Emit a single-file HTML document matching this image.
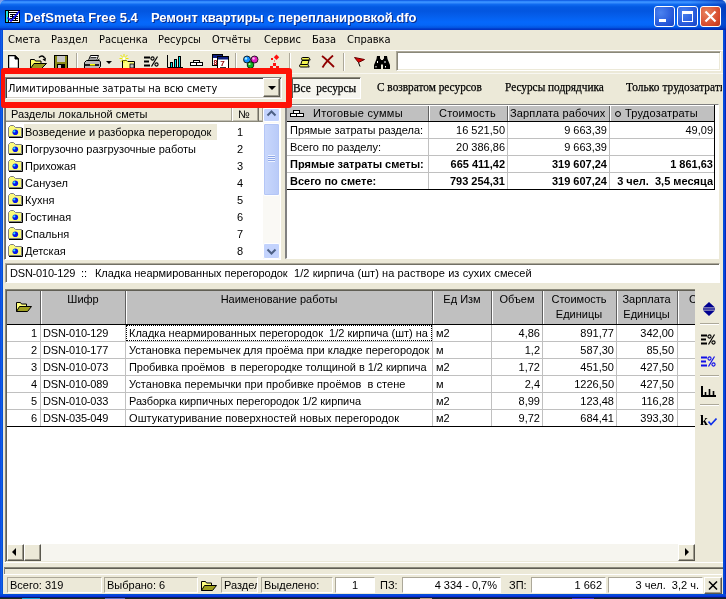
<!DOCTYPE html>
<html lang="ru">
<head>
<meta charset="utf-8">
<title>DefSmeta Free 5.4</title>
<style>
*{box-sizing:border-box;margin:0;padding:0}
html,body{width:726px;height:599px;overflow:hidden;background:#e8eefc}
body{position:relative;font-family:"Liberation Sans",sans-serif;font-size:11px;color:#000}
.abs,.abs>*{position:absolute}
#win{will-change:transform;position:absolute;left:0;top:0;width:726px;height:598px;background:#ece9d8;overflow:hidden;border-radius:5px 5px 0 0}
#title{left:0;top:0;width:726px;height:30px;background:linear-gradient(#0042d4 0,#2c86fc 1px,#3a90ff 2.5px,#0f6af0 4.5px,#0359e2 7px,#0356e0 11px,#0560ee 17px,#0568fc 22px,#0566f8 25px,#0355e2 27.5px,#0036c6 29px,#0032c0 30px)}
#title .t{top:10px;color:#fff;font-weight:bold;font-size:13px;white-space:pre;text-shadow:1px 1px 0 #0a2a8a;letter-spacing:0}
.bl{left:0;top:30px;width:3px;height:566px;background:linear-gradient(90deg,#0831d9,#166aee 1px,#0855dd 2px,#0046d0 3px)}
.br{left:723px;top:30px;width:3px;height:566px;background:linear-gradient(90deg,#0046d0,#0855dd 1px,#0831d9 2px,#001ea0)}
.bb{left:0;top:594px;width:726px;height:4px;background:linear-gradient(#0046d0 0,#0855dd 1px,#0831d9 2px,#0831d9 3px,#0a1a60 3px,#0a1a60 4px)}
.cb{top:6px;width:21px;height:21px;border:1px solid #fff;border-radius:3px;background:radial-gradient(circle at 30% 30%,#4b82ef,#2355d8 70%,#1a45c0)}
.menu span{top:33px;font-family:"DejaVu Sans Condensed","DejaVu Sans",sans-serif;font-size:11px;white-space:pre}
.sunk{border:1px solid;border-color:#808080 #fff #fff #808080;box-shadow:inset 1px 1px 0 #404040,inset -1px -1px 0 #d4d0c8;background:#fff}
.hdr{background:#c0c0c0}
.g{background:#c0c0c0}
.row{white-space:pre}
.tabs span{top:80px;font-family:"Liberation Serif",serif;font-size:12px;white-space:pre;-webkit-text-stroke:.25px #000;transform:scaleX(.942);transform-origin:0 0}
.lst div{left:25px;height:17px;line-height:17px;white-space:pre}
.lst i{left:231px;font-style:normal;line-height:17px}
.fold{width:14px;height:12px}
.vl{width:1px;background:#c0c0c0}
.hl{height:1px;background:#c0c0c0}
.cell{height:17px;line-height:17px;white-space:pre;overflow:hidden}
.r{text-align:right}
.st{top:577px;height:16px;border:1px solid;border-color:#aca899 #fff #fff #aca899;line-height:15px;white-space:pre;overflow:hidden}
</style>
</head>
<body>
<div style="position:absolute;left:0;top:598px;width:726px;height:1px;background:linear-gradient(90deg,#20301c 0,#20301c 22px,#18a0d0 22px,#18a0d0 40px,#20301c 40px,#20301c 105px,#6070c0 105px,#6070c0 125px,#1c2820 125px,#1c2820 420px,#c0a080 420px,#c0a080 432px,#1c2428 432px,#1c2428 572px,#3030e0 572px,#3030e0 594px,#1c2428 594px)"></div>
<div style="position:absolute;left:0;top:0;width:8px;height:8px;background:#7c9cec"></div>
<div id="win" class="abs">
  <!-- title bar -->
  <div id="title" class="abs">
    <svg style="left:5px;top:10px" width="15" height="13" viewBox="0 0 15 13"><rect x="0" y="0" width="15" height="13" fill="#000"/><rect x="1" y="1" width="2" height="11" fill="#1fe0e0"/><rect x="4" y="1" width="10" height="11" fill="#fff"/><path d="M4 2.500h10M5 4.500h8M5 6.500h8M5 8.500h8M5 10.500h8M7.500 4v7M10.500 4v7" stroke="#000" stroke-width="1" fill="none"/><path d="M2.500 7.500l3.500 3.500L14.500 1" stroke="#1010f0" stroke-width="1.700" fill="none"/></svg>
    <div style="left:690px;top:0;width:36px;height:30px;background:linear-gradient(90deg,rgba(0,30,150,0),rgba(0,30,150,.45))"></div>
    <span class="t" style="left:24px;letter-spacing:.07px">DefSmeta Free 5.4</span>
    <span class="t" style="left:151px;letter-spacing:-.05px">Ремонт квартиры с перепланировкой.dfo</span>
    <div class="cb" style="left:654px"><div style="position:absolute;left:4px;top:12px;width:7px;height:3px;background:#fff"></div></div>
    <div class="cb" style="left:677px"><div style="position:absolute;left:4px;top:4px;width:11px;height:11px;border:1px solid #fff;border-top-width:3px"></div></div>
    <div class="cb" style="left:700px;background:radial-gradient(circle at 30% 30%,#e8845f,#d6482a 70%,#b8361c)"><svg style="position:absolute;left:3px;top:3px" width="13" height="13" viewBox="0 0 13 13"><path d="M1.500 1.500l10 10M11.500 1.500l-10 10" stroke="#fff" stroke-width="2.200"/></svg></div>
  </div>
  <div class="abs"><div class="bl"></div><div class="br"></div><div class="bb"></div></div>

  <!-- menu -->
  <div class="abs menu">
    <span style="left:8px">Смета</span><span style="left:51px">Раздел</span><span style="left:99px">Расценка</span><span style="left:158px">Ресурсы</span><span style="left:212px">Отчёты</span><span style="left:264px">Сервис</span><span style="left:312px">База</span><span style="left:347px">Справка</span>
  </div>

  <!-- toolbar -->
  <div class="abs" id="tb">
    <div style="left:3px;top:50px;width:720px;height:1px;background:#fff"></div>
    <div style="left:396px;top:51px;width:325px;height:20px;background:#fff;border:1px solid;border-color:#aca899 #fff #fff #aca899;box-shadow:inset 1px 1px 0 #8a887a,inset -1px -1px 0 #ece9d8"></div>
    <div style="left:3px;top:73px;width:720px;height:1px;background:#f8f7f1"></div>
    <div style="left:76px;top:53px;width:2px;height:18px;background:linear-gradient(90deg,#aca899 1px,#fff 1px)"></div>
    <div style="left:235px;top:53px;width:2px;height:18px;background:linear-gradient(90deg,#aca899 1px,#fff 1px)"></div>
    <div style="left:289px;top:53px;width:2px;height:18px;background:linear-gradient(90deg,#aca899 1px,#fff 1px)"></div>
    <div style="left:343px;top:53px;width:2px;height:18px;background:linear-gradient(90deg,#aca899 1px,#fff 1px)"></div>
    <svg style="left:8px;top:55px" width="11" height="14" viewBox="0 0 11 14"><path d="M0.600 0.600h6.400l3.400 3.400v9.400h-9.800z" fill="#fff" stroke="#000" stroke-width="1.200"/><path d="M7 0.600v3.400h3.400z" fill="#000" stroke="#000"/></svg>
    <svg style="left:30px;top:55px" width="17" height="15" viewBox="0 0 17 15"><path d="M9 2.500c2-2 4.500-2 5.500 0.500" fill="none" stroke="#000" stroke-width="1.500"/><path d="M12.500 4.500l3.500-2-0.500 4z" fill="#000"/><path d="M0.500 13.500V4.500h4l1 1.500h5.500v2.500" fill="#ffff66" stroke="#000"/><path d="M0.500 13.500l3.500-5h12.500l-5 5z" fill="#9a9a20" stroke="#000"/></svg>
    <svg style="left:54px;top:55px" width="14" height="15" viewBox="0 0 14 15"><rect x="0.500" y="0.500" width="13" height="14" fill="#8a8a18" stroke="#000"/><rect x="3" y="1" width="8" height="6" fill="#c8c8c8"/><rect x="3" y="9" width="8" height="5" fill="#000"/><rect x="4" y="10" width="3" height="4" fill="#c8c8c8"/></svg>
    <svg style="left:84px;top:55px" width="17" height="14" viewBox="0 0 17 14"><path d="M4.500 5.500l2-5h8l-2 5z" fill="#fff" stroke="#000"/><path d="M6.500 2.500h6M6 4h6" stroke="#000" stroke-width=".8"/><path d="M0.500 7.500l2-2h13l1 1.500v4.500l-2 2h-14z" fill="#b8b8b8" stroke="#000"/><rect x="1" y="9" width="14" height="2" fill="#202020"/><path d="M13.500 5.500l2 -1.500" stroke="#000"/><rect x="6" y="9" width="5" height="1.500" fill="#ffff00"/></svg>
    <div style="left:106px;top:61px;width:0;height:0;border:3px solid transparent;border-top:3px solid #000;border-bottom:0"></div>
    <svg style="left:119px;top:54px" width="17" height="15" viewBox="0 0 17 15"><path d="M3.500 14.500V6.500h4l1 1h7v7z" fill="#ffff80" stroke="#000"/><rect x="11" y="10" width="4" height="4" fill="#c0c0c0" stroke="#000" stroke-width=".8"/><path d="M5 0v9M0.500 4.500h9M1.500 1l7 7M8.500 1l-7 7" stroke="#e8e800" stroke-width="1"/><circle cx="5" cy="4.500" r="1.500" fill="#fff"/></svg>
    <svg style="left:144px;top:56px" width="15" height="11" viewBox="0 0 15 11"><path d="M0 1.500h6M0 5.500h5M0 9.500h6" stroke="#000" stroke-width="2"/><path d="M13.500 0.500l-6 10" stroke="#000" stroke-width="1.200"/><circle cx="8.500" cy="2.500" r="1.600" fill="none" stroke="#000" stroke-width="1.100"/><circle cx="12.500" cy="8.500" r="1.600" fill="none" stroke="#000" stroke-width="1.100"/></svg>
    <svg style="left:167px;top:55px" width="16" height="13" viewBox="0 0 16 13"><path d="M0.500 0v12.500H16" stroke="#000" fill="none"/><rect x="3.500" y="7.500" width="2" height="5" fill="#00e0e0" stroke="#000"/><rect x="7.500" y="4.500" width="2" height="8" fill="#00e0e0" stroke="#000"/><rect x="11.500" y="1.500" width="2" height="11" fill="#00e0e0" stroke="#000"/></svg>
    <svg style="left:190px;top:60px" width="13" height="6" viewBox="0 0 13 6"><rect x="3.500" y="0.500" width="6" height="2" fill="#fff" stroke="#000"/><rect x="0.500" y="2.500" width="12" height="3" fill="#fff" stroke="#000"/><path d="M6.500 2.500v3" stroke="#000"/></svg>
    <svg style="left:212px;top:54px" width="17" height="15" viewBox="0 0 17 15"><rect x="0.500" y="0.500" width="10" height="11" fill="#fff" stroke="#000"/><rect x="1" y="1" width="9" height="3" fill="#102080"/><text x="1.500" y="10.500" font-family="Liberation Sans" font-weight="bold" font-size="7" fill="#a00000">8</text><rect x="5.500" y="2.500" width="11" height="12" fill="#fff" stroke="#000"/><rect x="6" y="3" width="10" height="2.500" fill="#102080"/><text x="8.300" y="12" font-family="Liberation Sans" font-weight="bold" font-size="8" fill="#900000">7</text><path d="M8 13.500h6" stroke="#000" stroke-width=".8"/></svg>
    <svg style="left:243px;top:55px" width="16" height="14" viewBox="0 0 16 14"><circle cx="4" cy="4.500" r="3.500" fill="#1090ff" stroke="#000" stroke-width=".8"/><circle cx="11.500" cy="4.500" r="3.500" fill="#e020c0" stroke="#000" stroke-width=".8"/><circle cx="7.500" cy="10" r="3.300" fill="#10b020" stroke="#000" stroke-width=".8"/><circle cx="3" cy="3.500" r="1.200" fill="#aef"/><circle cx="10.500" cy="3.500" r="1.200" fill="#fbe"/><circle cx="6.500" cy="9" r="1.100" fill="#bfb"/></svg>
    <svg style="left:269px;top:54px" width="11" height="15" viewBox="0 0 11 15"><path d="M7.500 0.500l2.700 2.700-2.700 2.700-2.700-2.700z" fill="#ff1010"/><rect x="2" y="4" width="2" height="2" fill="#ff1010"/><rect x="5" y="6.500" width="1" height="1" fill="#ff1010"/><rect x="4" y="9" width="3" height="3" fill="#ff1010"/><rect x="1" y="12" width="3" height="2" fill="#ff1010"/><rect x="7" y="12" width="3" height="2" fill="#ff1010"/></svg>
    <svg style="left:299px;top:56px" width="12" height="12" viewBox="0 0 12 12"><path d="M3 4.500L1.500 9.500h7L10 4.500z" fill="#f4f450" stroke="#000"/><rect x="2.500" y="1.500" width="8" height="2.500" rx="1.200" fill="#f4f450" stroke="#000"/><rect x="0.500" y="8.500" width="9" height="2.500" rx="1.200" fill="#f4f450" stroke="#000"/><path d="M10.500 3c1 0 1 1.500 0 1.500M9.500 10c1 0 1 1.500 0 1.500" stroke="#000" fill="none" stroke-width=".8"/></svg>
    <svg style="left:321px;top:55px" width="14" height="13" viewBox="0 0 14 13"><path d="M1 1c4 3 8 7 12 11M12 0.500C8 4 4 8 1.500 12.500" stroke="#900000" stroke-width="1.800" fill="none"/></svg>
    <svg style="left:354px;top:57px" width="11" height="10" viewBox="0 0 11 10"><path d="M0.500 0.500l10 2-6 3z" fill="#e00000" stroke="#600"/><path d="M4.500 5.500l1.500 4" stroke="#000"/></svg>
    <svg style="left:374px;top:56px" width="16" height="13" viewBox="0 0 16 13"><path d="M3 0h3v2.500l1 1V13H0V9l2.500-6z" fill="#000"/><path d="M13 0h-3v2.500l-1 1V13h7V9l-2.500-6z" fill="#000"/><rect x="6.500" y="4" width="3" height="4.500" fill="#000"/><rect x="3" y="5" width="1" height="2" fill="#fff"/><rect x="10.500" y="5" width="1" height="2" fill="#fff"/><rect x="1.500" y="10" width="1" height="1.500" fill="#fff"/><rect x="11" y="10" width="1" height="1.500" fill="#fff"/></svg>
  </div>

  <!-- tabs -->
  <div class="abs tabs">
    <div style="left:291px;top:77px;width:70px;height:22px;background:#f6f5ef;border:1px solid;border-color:#8a887a #fff #fff #8a887a;box-shadow:inset 1px 1px 0 #605e54"></div>
    <span style="left:293px;top:81px">Все  ресурсы</span><span style="left:377px">С возвратом ресурсов</span><span style="left:505px">Ресурсы подрядчика</span><span style="left:626px;width:102px;overflow:hidden;letter-spacing:.1px">Только трудозатраты</span>
  </div>

  <!-- combobox + red box -->
  <div class="abs">
    <div class="sunk" style="left:5px;top:77px;width:277px;height:22px"></div>
    <span style="left:8px;top:82px;font-family:'DejaVu Sans Condensed','DejaVu Sans',sans-serif;font-size:11px;white-space:pre">Лимитированные затраты на всю смету</span>
    <div style="left:263px;top:78px;width:17px;height:19px;background:#ece9d8;border:1px solid;border-color:#fff #5a584e #5a584e #fff;box-shadow:inset -1px -1px 0 #9d9a8c"></div>
    <div style="left:268px;top:86px;width:0;height:0;border:4px solid transparent;border-top:4px solid #000;border-bottom:0"></div>
    <div style="left:1px;top:68px;width:291px;height:40px;border:6px solid #fe1206;border-left-width:4px;border-radius:3px;z-index:10"></div>
  </div>

  <!-- left list -->
  <div class="abs" id="left">
    <div style="left:4px;top:107px;width:277px;height:153px;background:#fff;border:1px solid;border-color:#808080 #fff #fff #808080;box-shadow:inset 1px 0 0 #716f64"></div>
    <div style="left:6px;top:108px;width:257px;height:14px;background:#ece9d8;border-bottom:1px solid #8a887a;box-shadow:inset 0 -1px 0 #c0bdb0;border-right:1px solid #aca899"></div>
    <div style="left:231px;top:108px;width:1px;height:13px;background:#aca899"></div>
    <div style="left:232px;top:108px;width:1px;height:13px;background:#fff"></div>
    <div style="left:257px;top:108px;width:2px;height:13px;background:linear-gradient(90deg,#aca899 1px,#716f64 1px)"></div>
    <span style="left:11px;top:108px;white-space:pre">Разделы локальной сметы</span>
    <span style="left:238px;top:108px">№</span>
    <div style="left:24px;top:124px;width:193px;height:16px;background:#ece9d8"></div>
    <div class="abs lst">
      <div style="top:124px">Возведение и разборка перегородок</div><i style="top:124px;left:237px">1</i>
      <div style="top:141px">Погрузочно разгрузочные работы</div><i style="top:141px;left:237px">2</i>
      <div style="top:158px">Прихожая</div><i style="top:158px;left:237px">3</i>
      <div style="top:175px">Санузел</div><i style="top:175px;left:237px">4</i>
      <div style="top:192px">Кухня</div><i style="top:192px;left:237px">5</i>
      <div style="top:209px">Гостиная</div><i style="top:209px;left:237px">6</i>
      <div style="top:226px">Спальня</div><i style="top:226px;left:237px">7</i>
      <div style="top:243px">Детская</div><i style="top:243px;left:237px">8</i>
    </div>
    <svg style="left:8px;top:125px" width="15" height="13" viewBox="0 0 15 13"><path d="M1 12.500h13.500V3" stroke="#000" fill="none"/><path d="M0.500 11.500V2.500l2-2h3l2 2h6v9z" fill="#fbfb7a" stroke="#808080"/><circle cx="7.300" cy="7.200" r="2.800" fill="#0a18e8"/><circle cx="6.300" cy="6.400" r="1.100" fill="#30e8ff"/></svg>
    <svg style="left:8px;top:142px" width="15" height="13" viewBox="0 0 15 13"><path d="M1 12.500h13.500V3" stroke="#000" fill="none"/><path d="M0.500 11.500V2.500l2-2h3l2 2h6v9z" fill="#fbfb7a" stroke="#808080"/><circle cx="7.300" cy="7.200" r="2.800" fill="#0a18e8"/><circle cx="6.300" cy="6.400" r="1.100" fill="#30e8ff"/></svg>
    <svg style="left:8px;top:159px" width="15" height="13" viewBox="0 0 15 13"><path d="M1 12.500h13.500V3" stroke="#000" fill="none"/><path d="M0.500 11.500V2.500l2-2h3l2 2h6v9z" fill="#fbfb7a" stroke="#808080"/><circle cx="7.300" cy="7.200" r="2.800" fill="#0a18e8"/><circle cx="6.300" cy="6.400" r="1.100" fill="#30e8ff"/></svg>
    <svg style="left:8px;top:176px" width="15" height="13" viewBox="0 0 15 13"><path d="M1 12.500h13.500V3" stroke="#000" fill="none"/><path d="M0.500 11.500V2.500l2-2h3l2 2h6v9z" fill="#fbfb7a" stroke="#808080"/><circle cx="7.300" cy="7.200" r="2.800" fill="#0a18e8"/><circle cx="6.300" cy="6.400" r="1.100" fill="#30e8ff"/></svg>
    <svg style="left:8px;top:193px" width="15" height="13" viewBox="0 0 15 13"><path d="M1 12.500h13.500V3" stroke="#000" fill="none"/><path d="M0.500 11.500V2.500l2-2h3l2 2h6v9z" fill="#fbfb7a" stroke="#808080"/><circle cx="7.300" cy="7.200" r="2.800" fill="#0a18e8"/><circle cx="6.300" cy="6.400" r="1.100" fill="#30e8ff"/></svg>
    <svg style="left:8px;top:210px" width="15" height="13" viewBox="0 0 15 13"><path d="M1 12.500h13.500V3" stroke="#000" fill="none"/><path d="M0.500 11.500V2.500l2-2h3l2 2h6v9z" fill="#fbfb7a" stroke="#808080"/><circle cx="7.300" cy="7.200" r="2.800" fill="#0a18e8"/><circle cx="6.300" cy="6.400" r="1.100" fill="#30e8ff"/></svg>
    <svg style="left:8px;top:227px" width="15" height="13" viewBox="0 0 15 13"><path d="M1 12.500h13.500V3" stroke="#000" fill="none"/><path d="M0.500 11.500V2.500l2-2h3l2 2h6v9z" fill="#fbfb7a" stroke="#808080"/><circle cx="7.300" cy="7.200" r="2.800" fill="#0a18e8"/><circle cx="6.300" cy="6.400" r="1.100" fill="#30e8ff"/></svg>
    <svg style="left:8px;top:244px" width="15" height="13" viewBox="0 0 15 13"><path d="M1 12.500h13.500V3" stroke="#000" fill="none"/><path d="M0.500 11.500V2.500l2-2h3l2 2h6v9z" fill="#fbfb7a" stroke="#808080"/><circle cx="7.300" cy="7.200" r="2.800" fill="#0a18e8"/><circle cx="6.300" cy="6.400" r="1.100" fill="#30e8ff"/></svg>
    <!-- scrollbar -->
    <div style="left:263px;top:108px;width:17px;height:151px;background:#faf9f5"></div>
    <div style="left:263px;top:108px;width:17px;height:14px;background:#c3d3fd;border:1px solid #fff;border-radius:2px"></div>
    <div style="left:263px;top:123px;width:17px;height:73px;background:linear-gradient(90deg,#cad8fc,#b8caf8);border:1px solid #fff;border-radius:2px;box-shadow:inset 0 0 0 1px #b4c6f6"></div>
    <div style="left:263px;top:243px;width:17px;height:16px;background:#c3d3fd;border:1px solid #fff;border-radius:2px"></div>
    <svg style="left:266px;top:109px" width="11" height="8" viewBox="0 0 11 8"><path d="M1.5 6.500l4-4 4 4" stroke="#4d6185" stroke-width="2" fill="none"/></svg>
    <svg style="left:266px;top:248px" width="11" height="8" viewBox="0 0 11 8"><path d="M1.500 1.500l4 4 4-4" stroke="#4d6185" stroke-width="2" fill="none"/></svg>
    <div style="left:268px;top:155px;width:7px;height:7px;background:repeating-linear-gradient(#eef3ff 0,#eef3ff 1px,#8ea7e8 1px,#8ea7e8 2px)"></div>
  </div>

  <!-- summary table -->
  <div class="abs" id="sum">
    <div style="left:285px;top:104px;width:434px;height:155px;background:#fff;border:1px solid;border-color:#808080 #fff #fff #808080;border-left-width:2px"></div>
    <div class="g" style="left:287px;top:106px;width:427px;height:15px"></div>
    <div style="left:287px;top:121px;width:428px;height:1px;background:#000"></div>
    <div style="left:287px;top:189px;width:428px;height:1px;background:#000"></div>
    <div style="left:714px;top:105px;width:1px;height:85px;background:#000"></div>
    <div class="hl" style="left:287px;top:138px;width:427px"></div>
    <div class="hl" style="left:287px;top:155px;width:427px"></div>
    <div class="hl" style="left:287px;top:172px;width:427px"></div>
    <div style="left:428px;top:106px;width:2px;height:15px;background:linear-gradient(90deg,#606060 1px,#fff 1px)"></div><div class="vl" style="left:428px;top:122px;height:67px"></div>
    <div style="left:507px;top:106px;width:2px;height:15px;background:linear-gradient(90deg,#606060 1px,#fff 1px)"></div><div class="vl" style="left:507px;top:122px;height:67px"></div>
    <div style="left:609px;top:106px;width:2px;height:15px;background:linear-gradient(90deg,#606060 1px,#fff 1px)"></div><div class="vl" style="left:609px;top:122px;height:67px"></div>
    <svg style="left:290px;top:110px" width="14" height="7" viewBox="0 0 14 7"><rect x="3.500" y="0.500" width="6" height="3" fill="#fff" stroke="#000"/><rect x="0.500" y="3.500" width="6" height="3" fill="#fff" stroke="#000"/><rect x="6.500" y="3.500" width="7" height="3" fill="#fff" stroke="#000"/></svg>
    <div class="cell" style="left:313px;top:105px;font-size:11px;letter-spacing:.3px">Итоговые суммы</div>
    <div class="cell" style="left:439px;top:105px;letter-spacing:.2px">Стоимость</div>
    <div class="cell" style="left:510px;top:105px;letter-spacing:.15px">Зарплата рабочих</div>
    <div style="left:615px;top:111px;width:6px;height:6px;border:1px solid #000;border-radius:50%"></div>
    <div class="cell" style="left:625px;top:105px;letter-spacing:.2px">Трудозатраты</div>
    <div class="cell" style="left:290px;top:122px">Прямые затраты раздела:</div>
    <div class="cell r" style="left:430px;top:122px;width:75px">16 521,50</div>
    <div class="cell r" style="left:509px;top:122px;width:98px">9 663,39</div>
    <div class="cell r" style="left:611px;top:122px;width:102px">49,09</div>
    <div class="cell" style="left:290px;top:139px">Всего по разделу:</div>
    <div class="cell r" style="left:430px;top:139px;width:75px">20 386,86</div>
    <div class="cell r" style="left:509px;top:139px;width:98px">9 663,39</div>
    <div class="cell" style="left:290px;top:156px;font-weight:bold">Прямые затраты сметы:</div>
    <div class="cell r" style="left:430px;top:156px;width:75px;font-weight:bold">665 411,42</div>
    <div class="cell r" style="left:509px;top:156px;width:98px;font-weight:bold">319 607,24</div>
    <div class="cell r" style="left:611px;top:156px;width:102px;font-weight:bold">1 861,63</div>
    <div class="cell" style="left:290px;top:173px;font-weight:bold">Всего по смете:</div>
    <div class="cell r" style="left:430px;top:173px;width:75px;font-weight:bold">793 254,31</div>
    <div class="cell r" style="left:509px;top:173px;width:98px;font-weight:bold">319 607,24</div>
    <div class="cell r" style="left:611px;top:173px;width:102px;font-weight:bold">3 чел.  3,5 месяца</div>
  </div>

  <!-- info line -->
  <div class="abs">
    <div style="left:5px;top:263px;width:715px;height:20px;background:#fff;border:1px solid;border-color:#aca899 #fff #fff #aca899;box-shadow:inset 1px 1px 0 #716f64"></div>
    <span style="left:10px;top:267px;white-space:pre;letter-spacing:-.2px">DSN-010-129</span>
    <span style="left:81px;top:267px;white-space:pre">::</span>
    <span style="left:95px;top:267px;white-space:pre;letter-spacing:-.04px">Кладка неармированных перегородок</span>
    <span style="left:294px;top:267px;white-space:pre;letter-spacing:.08px">1/2 кирпича (шт) на растворе из сухих смесей</span>
  </div>

  <!-- grid -->
  <div class="abs" id="grid">
    <div style="left:5px;top:289px;width:690px;height:274px;background:#fff;border:1px solid;border-color:#808080 #fff #fff #808080;border-right:0;border-color:#8a887a #fff #fff #8a887a;box-shadow:inset 1px 1px 0 #605e54"></div>
    <div class="g" style="left:7px;top:291px;width:688px;height:33px"></div>
    <div style="left:40px;top:291px;width:2px;height:33px;background:linear-gradient(90deg,#606060 1px,#fff 1px)"></div>
    <div class="vl" style="left:40px;top:325px;height:101px"></div>
    <div style="left:125px;top:291px;width:2px;height:33px;background:linear-gradient(90deg,#606060 1px,#fff 1px)"></div>
    <div class="vl" style="left:125px;top:325px;height:101px"></div>
    <div style="left:432px;top:291px;width:2px;height:33px;background:linear-gradient(90deg,#606060 1px,#fff 1px)"></div>
    <div class="vl" style="left:432px;top:325px;height:101px"></div>
    <div style="left:491px;top:291px;width:2px;height:33px;background:linear-gradient(90deg,#606060 1px,#fff 1px)"></div>
    <div class="vl" style="left:491px;top:325px;height:101px"></div>
    <div style="left:542px;top:291px;width:2px;height:33px;background:linear-gradient(90deg,#606060 1px,#fff 1px)"></div>
    <div class="vl" style="left:542px;top:325px;height:101px"></div>
    <div style="left:616px;top:291px;width:2px;height:33px;background:linear-gradient(90deg,#606060 1px,#fff 1px)"></div>
    <div class="vl" style="left:616px;top:325px;height:101px"></div>
    <div style="left:677px;top:291px;width:2px;height:33px;background:linear-gradient(90deg,#606060 1px,#fff 1px)"></div>
    <div class="vl" style="left:677px;top:325px;height:101px"></div>
    <div class="hl" style="left:7px;top:341px;width:688px"></div>
    <div class="hl" style="left:7px;top:358px;width:688px"></div>
    <div class="hl" style="left:7px;top:375px;width:688px"></div>
    <div class="hl" style="left:7px;top:392px;width:688px"></div>
    <div class="hl" style="left:7px;top:409px;width:688px"></div>
    <div style="left:7px;top:324px;width:688px;height:1px;background:#000"></div>
    <div style="left:7px;top:426px;width:688px;height:1px;background:#000"></div>
        <div class="cell" style="left:41px;top:292px;width:84px;text-align:center;height:15px;line-height:15px">Шифр</div>
    <div class="cell" style="left:126px;top:292px;width:306px;text-align:center;height:15px;line-height:15px">Наименование работы</div>
    <div class="cell" style="left:433px;top:292px;width:58px;text-align:center;height:15px;line-height:15px">Ед Изм</div>
    <div class="cell" style="left:492px;top:292px;width:50px;text-align:center;height:15px;line-height:15px">Объем</div>
    <div class="cell" style="left:543px;top:292px;width:72px;text-align:center;height:15px;line-height:15px">Стоимость</div>
    <div class="cell" style="left:543px;top:307px;width:72px;text-align:center;height:15px;line-height:15px">Единицы</div>
    <div class="cell" style="left:617px;top:292px;width:59px;text-align:center;height:15px;line-height:15px">Зарплата</div>
    <div class="cell" style="left:617px;top:307px;width:59px;text-align:center;height:15px;line-height:15px">Единицы</div>
    <div class="cell" style="left:689px;top:292px;width:6px;height:15px;line-height:15px">С</div>
    <svg style="left:16px;top:301px" width="16" height="12" viewBox="0 0 16 12"><path d="M0.500 10.500V1.500h4l1 1.500h5v2.500" fill="#ffff80" stroke="#000" stroke-width="1"/><path d="M0.500 10.500l3-5h12l-4 5z" fill="#a0a020" stroke="#000" stroke-width="1"/></svg>
    <div class="cell r" style="left:8px;top:325px;width:29px">1</div>
    <div class="cell" style="left:43px;top:325px;width:81px;letter-spacing:-.2px">DSN-010-129</div>
    <div class="cell" style="left:129px;top:325px;width:302px">Кладка неармированных перегородок  1/2 кирпича (шт) на растворе</div>
    <div class="cell" style="left:436px;top:325px;width:50px">м2</div>
    <div class="cell r" style="left:493px;top:325px;width:47px">4,86</div>
    <div class="cell r" style="left:544px;top:325px;width:70px">891,77</div>
    <div class="cell r" style="left:618px;top:325px;width:56px">342,00</div>
    <div class="cell r" style="left:8px;top:342px;width:29px">2</div>
    <div class="cell" style="left:43px;top:342px;width:81px;letter-spacing:-.2px">DSN-010-177</div>
    <div class="cell" style="left:129px;top:342px;width:302px">Установка перемычек для проёма при кладке перегородок</div>
    <div class="cell" style="left:436px;top:342px;width:50px">м</div>
    <div class="cell r" style="left:493px;top:342px;width:47px">1,2</div>
    <div class="cell r" style="left:544px;top:342px;width:70px">587,30</div>
    <div class="cell r" style="left:618px;top:342px;width:56px">85,50</div>
    <div class="cell r" style="left:8px;top:359px;width:29px">3</div>
    <div class="cell" style="left:43px;top:359px;width:81px;letter-spacing:-.2px">DSN-010-073</div>
    <div class="cell" style="left:129px;top:359px;width:302px;letter-spacing:-.05px">Пробивка проёмов  в перегородке толщиной в 1/2 кирпича</div>
    <div class="cell" style="left:436px;top:359px;width:50px">м2</div>
    <div class="cell r" style="left:493px;top:359px;width:47px">1,72</div>
    <div class="cell r" style="left:544px;top:359px;width:70px">451,50</div>
    <div class="cell r" style="left:618px;top:359px;width:56px">427,50</div>
    <div class="cell r" style="left:8px;top:376px;width:29px">4</div>
    <div class="cell" style="left:43px;top:376px;width:81px;letter-spacing:-.2px">DSN-010-089</div>
    <div class="cell" style="left:129px;top:376px;width:302px;letter-spacing:.05px">Установка перемычки при пробивке проёмов  в стене</div>
    <div class="cell" style="left:436px;top:376px;width:50px">м</div>
    <div class="cell r" style="left:493px;top:376px;width:47px">2,4</div>
    <div class="cell r" style="left:544px;top:376px;width:70px">1226,50</div>
    <div class="cell r" style="left:618px;top:376px;width:56px">427,50</div>
    <div class="cell r" style="left:8px;top:393px;width:29px">5</div>
    <div class="cell" style="left:43px;top:393px;width:81px;letter-spacing:-.2px">DSN-010-033</div>
    <div class="cell" style="left:129px;top:393px;width:302px;letter-spacing:-.05px">Разборка кирпичных перегородок 1/2 кирпича</div>
    <div class="cell" style="left:436px;top:393px;width:50px">м2</div>
    <div class="cell r" style="left:493px;top:393px;width:47px">8,99</div>
    <div class="cell r" style="left:544px;top:393px;width:70px">123,48</div>
    <div class="cell r" style="left:618px;top:393px;width:56px">116,28</div>
    <div class="cell r" style="left:8px;top:410px;width:29px">6</div>
    <div class="cell" style="left:43px;top:410px;width:81px;letter-spacing:-.2px">DSN-035-049</div>
    <div class="cell" style="left:129px;top:410px;width:302px;letter-spacing:.08px">Оштукатуривание поверхностей новых перегородок</div>
    <div class="cell" style="left:436px;top:410px;width:50px">м2</div>
    <div class="cell r" style="left:493px;top:410px;width:47px">9,72</div>
    <div class="cell r" style="left:544px;top:410px;width:70px">684,41</div>
    <div class="cell r" style="left:618px;top:410px;width:56px">393,30</div>
    <div style="left:126px;top:325px;width:306px;height:16px;border:1px dotted #000"></div>
    <div style="left:7px;top:544px;width:688px;height:17px;background:#f6f5ef"></div><div style="left:6px;top:561px;width:690px;height:1px;background:#ece9d8"></div>
    <div style="left:7px;top:544px;width:17px;height:17px;background:#ece9d8;border:1px solid;border-color:#fff #5a584e #5a584e #fff;box-shadow:inset -1px -1px 0 #9d9a8c"></div>
    <div style="left:24px;top:544px;width:17px;height:17px;background:#ece9d8;border:1px solid;border-color:#fff #5a584e #5a584e #fff;box-shadow:inset -1px -1px 0 #9d9a8c"></div>
    <div style="left:678px;top:544px;width:17px;height:17px;background:#ece9d8;border:1px solid;border-color:#fff #5a584e #5a584e #fff;box-shadow:inset -1px -1px 0 #9d9a8c"></div>
    <div style="left:12px;top:548px;width:0;height:0;border:4px solid transparent;border-right:4px solid #000;border-left:0"></div>
    <div style="left:685px;top:548px;width:0;height:0;border:4px solid transparent;border-left:4px solid #000;border-right:0"></div>
  </div>

  <div class="abs" id="rtb">
    <svg style="left:703px;top:302px" width="12" height="14" viewBox="0 0 12 14"><path d="M6 0l6 5.500H0z" fill="#000090"/><path d="M0 7h12" stroke="#000090" stroke-width="1.400"/><path d="M6 14l6-5.500H0z" fill="#000090"/></svg>
    <div style="left:700px;top:323px;width:19px;height:2px;background:linear-gradient(#aca899 1px,#fff 1px)"></div>
    <div style="left:700px;top:375px;width:19px;height:2px;background:linear-gradient(#aca899 1px,#fff 1px)"></div>
    <div style="left:700px;top:404px;width:19px;height:2px;background:linear-gradient(#aca899 1px,#fff 1px)"></div>
    <svg style="left:701px;top:334px" width="15" height="11" viewBox="0 0 15 11"><path d="M0 1.500h6M0 5.500h5M0 9.500h6" stroke="#000" stroke-width="2"/><path d="M13.500 0.500l-6 10" stroke="#000" stroke-width="1.200"/><circle cx="8.500" cy="2.500" r="1.600" fill="none" stroke="#000" stroke-width="1.100"/><circle cx="12.500" cy="8.500" r="1.600" fill="none" stroke="#000" stroke-width="1.100"/></svg>
    <svg style="left:701px;top:356px" width="15" height="11" viewBox="0 0 15 11"><path d="M0 1.500h6M0 5.500h5M0 9.500h6" stroke="#1010e8" stroke-width="2"/><path d="M13.500 0.500l-6 10" stroke="#1010e8" stroke-width="1.200"/><circle cx="8.500" cy="2.500" r="1.600" fill="none" stroke="#1010e8" stroke-width="1.100"/><circle cx="12.500" cy="8.500" r="1.600" fill="none" stroke="#1010e8" stroke-width="1.100"/></svg>
    <svg style="left:701px;top:386px" width="16" height="11" viewBox="0 0 16 11"><path d="M1 0v10h14" stroke="#000" stroke-width="2" fill="none"/><path d="M4.500 6v4M8.500 3v7M12.500 5v5" stroke="#000" stroke-width="1.600" fill="none"/></svg>
    <span style="left:700px;top:414px;font-family:'Liberation Serif',serif;font-weight:bold;font-size:14px;line-height:14px">k</span>
    <svg style="left:708px;top:418px" width="9" height="8" viewBox="0 0 9 8"><path d="M0.500 3.500l2.500 3 5.500-6" stroke="#1030e8" stroke-width="1.600" fill="none"/></svg>
  </div>

  <!-- status bar -->
  <div class="abs" id="status">
        <div style="left:4px;top:562px;width:719px;height:1px;background:#fff"></div>
    <div style="left:4px;top:567px;width:719px;height:2px;background:linear-gradient(#8a887a 1px,#605e54 1px)"></div>
    <div style="left:4px;top:567px;width:1px;height:7px;background:#808080"></div>
    <div style="left:4px;top:574px;width:718px;height:1px;background:#fff"></div>
    <div class="st" style="left:7px;width:95px;padding-left:2px;">Всего: 319</div>
    <div class="st" style="left:104px;width:94px;padding-left:2px;">Выбрано: 6</div>
    <div class="st" style="left:221px;width:37px;padding-left:2px;padding-left:2px;">Раздел</div>
    <div class="st" style="left:261px;width:72px;padding-left:2px;">Выделено:</div>
    <div class="st" style="left:335px;width:40px;background:#fff;text-align:center;padding-right:0px;border-color:#aca899 #fff #fff #aca899">1</div>
    <span style="left:380px;top:579px">ПЗ:</span>
    <div class="st" style="left:402px;width:99px;background:#fff;text-align:right;padding-right:3px;border-color:#aca899 #fff #fff #aca899">4 334 - 0,7%</div>
    <span style="left:509px;top:579px">ЗП:</span>
    <div class="st" style="left:531px;width:75px;background:#fff;text-align:right;padding-right:3px;border-color:#aca899 #fff #fff #aca899">1 662</div>
    <div class="st" style="left:608px;width:95px;background:#fff;text-align:right;padding-right:3px;border-color:#aca899 #fff #fff #aca899">3 чел.  3,2 ч.</div>
    <div style="left:704px;top:577px;width:18px;height:17px;background:#ece9d8;border:1px solid;border-color:#fff #5a584e #5a584e #fff;box-shadow:inset -1px -1px 0 #9d9a8c"></div>
    <svg style="left:708px;top:581px" width="10" height="9" viewBox="0 0 10 9"><path d="M1 0.500l8 8M9 0.500l-8 8" stroke="#000" stroke-width="1.500"/></svg>
    <svg style="left:201px;top:580px" width="16" height="12" viewBox="0 0 16 12"><path d="M0.500 10.500V1.500h4l1 1.500h5v2.500" fill="#ffff80" stroke="#000" stroke-width="1"/><path d="M0.500 10.500l3-5h12l-4 5z" fill="#a0a020" stroke="#000" stroke-width="1"/></svg>
  </div>
</div>
</body>
</html>
